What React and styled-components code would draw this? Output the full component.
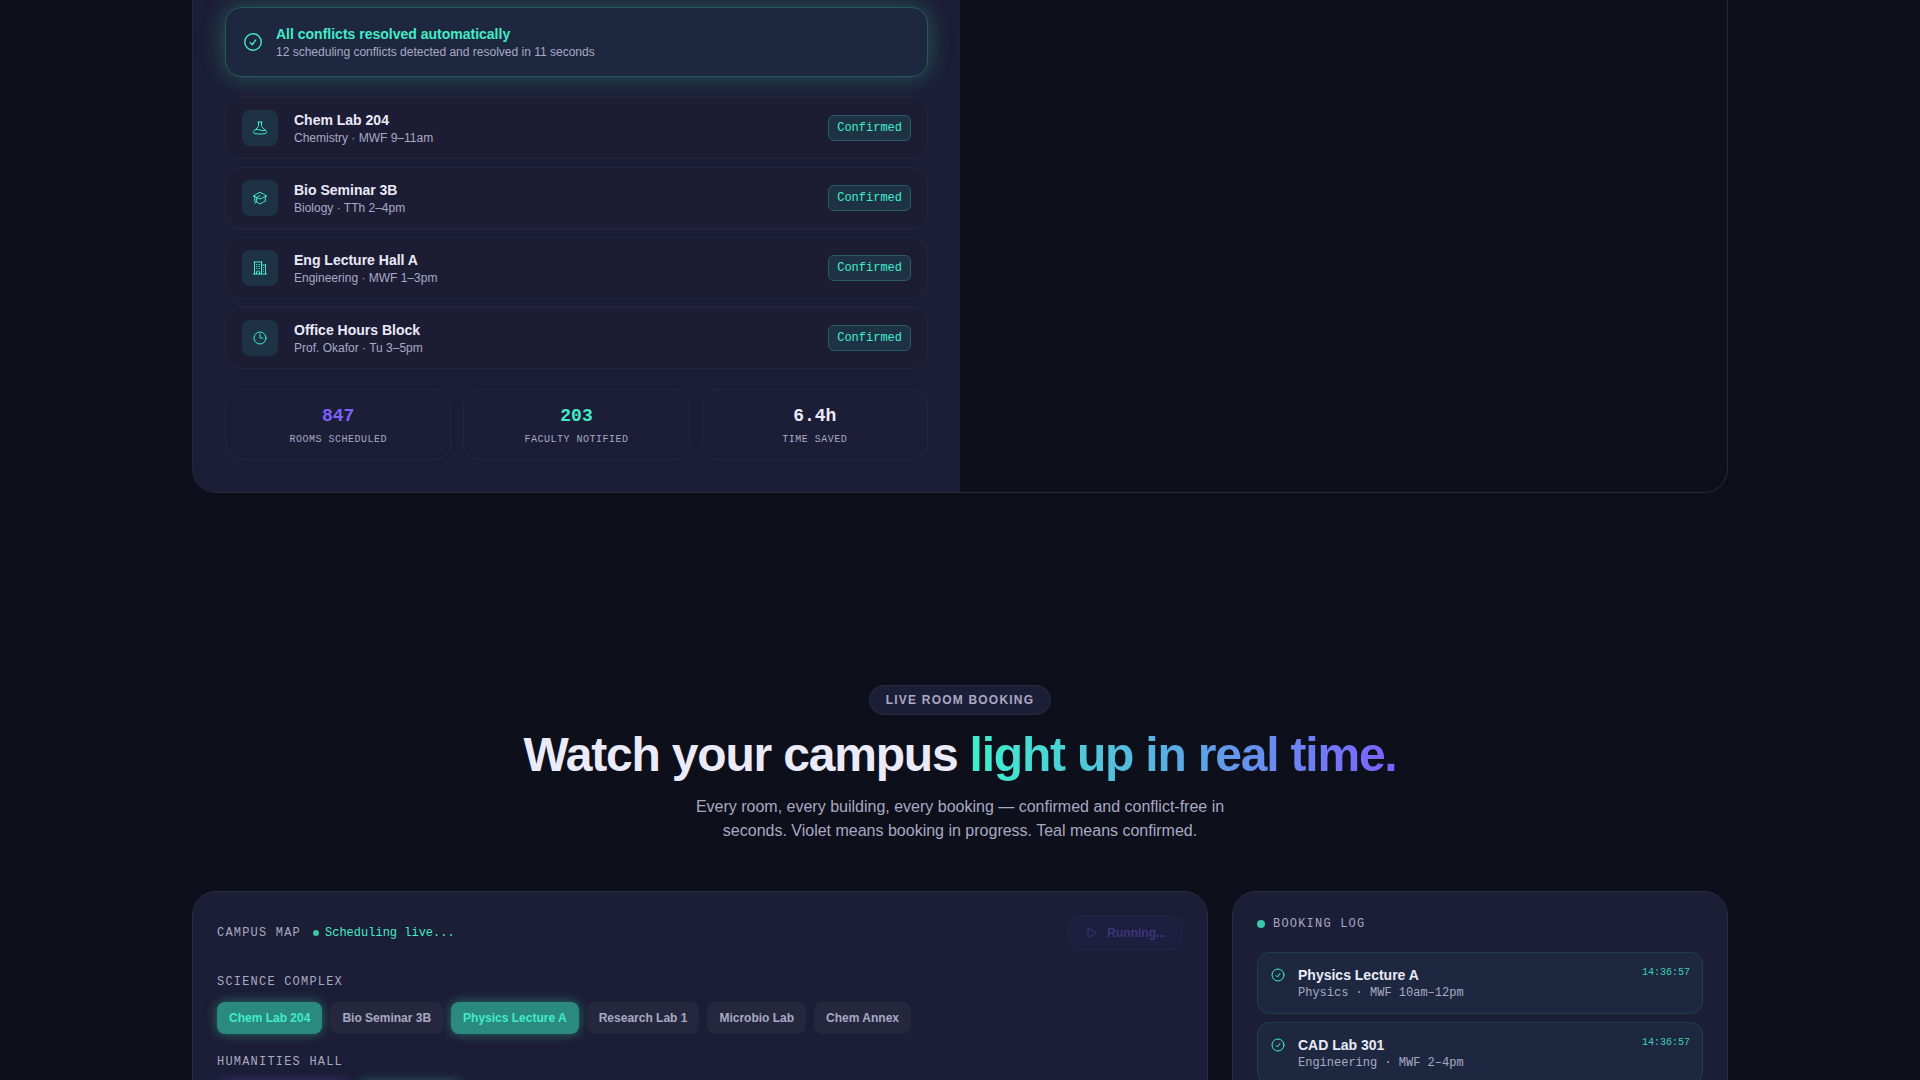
import React from 'react'
import styled, {createGlobalStyle, css} from 'styled-components'
import {
    HiOutlineAcademicCap,
    HiOutlineBeaker,
    HiOutlineBuildingOffice2,
    HiOutlineCheckCircle,
    HiOutlineClock,
    HiOutlinePlay
} from 'react-icons/hi2'


// --------------- Basic Styling -------------------
const sans = `'Liberation Sans', Arial, sans-serif`
const mono = `'Liberation Mono', 'Courier New', monospace`

const GlobalStyle = createGlobalStyle`
    * {
        box-sizing: border-box;
    }
    html {
        overflow: hidden;
        height: 100%;
    }
    body {
        margin: 0;
        height: 100%;
        overflow: hidden;
        background: #0d0f1b;
        color: #ebeaf8;
        font-family: ${sans};
        font-size: 14px;
        line-height: 20px;
    }
    h2, h3, p, ul {
        margin: 0;
        padding: 0;
    }
    ul {
        list-style: none;
    }
    svg {
        flex-shrink: 0;
    }
`

const Page = styled.main`
    max-width: 1584px;
    margin: 0 auto;
    padding: 0 24px;
`

// --------------- schedule preview ----------------
const Preview = styled.section`
    display: grid;
    grid-template-columns: 1fr 1fr;
    border: 1px solid #262838;
    border-top: none;
    border-radius: 0 0 24px 24px;
    overflow: hidden;
`

const Results = styled.div`
    display: flex;
    flex-direction: column;
    gap: 20px;
    padding: 7px 32px 32px;
    background: #1c1d36;
`

const Banner = styled.div`
    display: flex;
    align-items: center;
    gap: 12px;
    padding: 16px;
    border: 1px solid #25585c;
    border-radius: 16px;
    background: #1d2840;
    box-shadow: 0 0 24px rgba(61, 232, 186, 0.3);
    color: #43ebc8;
`

const Title = styled.h3`
    font-size: 14px;
    line-height: 20px;
    font-weight: 700;
    color: ${({$teal}) => $teal ? '#43ebc8' : '#ebeaf8'};
`

const Sub = styled.p`
    font-family: ${({$mono}) => $mono ? mono : sans};
    font-size: 12px;
    line-height: 16px;
    color: #a9a9c2;
`

const List = styled.ul`
    display: flex;
    flex-direction: column;
    gap: 8px;
`

const Row = styled.li`
    display: flex;
    align-items: center;
    gap: 16px;
    padding: 12px 16px;
    border: 1px solid #25273e;
    border-radius: 16px;
    background: #1c1d35;
`

const IconBox = styled.span`
    display: flex;
    align-items: center;
    justify-content: center;
    width: 36px;
    height: 36px;
    border-radius: 8px;
    background: #1d3345;
    color: #43ebc8;
`

const Grow = styled.div`
    flex: 1;
`

const Status = styled.span`
    padding: 4px 8px;
    border: 1px solid #285c62;
    border-radius: 6px;
    background: #1d3345;
    color: #43ebc8;
    font-family: ${mono};
    font-size: 12px;
    line-height: 16px;
`

const Stats = styled.div`
    display: grid;
    grid-template-columns: repeat(3, 1fr);
    gap: 12px;
`

const Stat = styled.div`
    padding: 14px 16px 12px;
    border: 1px solid #25273e;
    border-radius: 16px;
    text-align: center;
    font-family: ${mono};
`

const StatValue = styled.p`
    font-size: 18px;
    line-height: 25px;
    font-weight: 700;
    color: ${({$color}) => $color};
`

const StatLabel = styled.p`
    margin-top: 4px;
    font-size: 10px;
    line-height: 14px;
    letter-spacing: 0.05em;
    text-transform: uppercase;
    color: #a9a9c2;
`

// --------------- section heading -----------------
const Intro = styled.header`
    display: flex;
    flex-direction: column;
    align-items: center;
    padding: 192px 0 48px;
    text-align: center;
`

const Pill = styled.span`
    padding: 6px 16px;
    border: 1px solid #2a2b45;
    border-radius: 16px;
    background: #1c1d36;
    color: #a9a9c2;
    font-size: 12px;
    line-height: 16px;
    font-weight: 700;
    letter-spacing: 0.1em;
    text-transform: uppercase;
`

const Headline = styled.h2`
    margin: 12px 0;
    font-size: 48px;
    line-height: 56px;
    font-weight: 700;
    letter-spacing: -0.025em;
    color: #ebeaf8;

    span {
        background: linear-gradient(90deg, #3ef0cb, #7b61ff);
        background-clip: text;
        -webkit-background-clip: text;
        color: transparent;
    }
`

const Lead = styled.p`
    max-width: 560px;
    font-size: 16px;
    line-height: 24px;
    color: #a9a9c2;
`

// --------------- live booking --------------------
const Board = styled.section`
    display: grid;
    grid-template-columns: repeat(3, 1fr);
    gap: 24px;
`

const Panel = styled.div`
    grid-column: span ${({$span}) => $span || 1};
    padding: 24px;
    border: 1px solid #2a2c40;
    border-radius: 24px;
    background: #1c1d36;
`

const PanelHead = styled.div`
    display: flex;
    align-items: center;
    justify-content: space-between;
    margin-bottom: 24px;
`

const HeadGroup = styled.div`
    display: flex;
    align-items: center;
    gap: 12px;
`

const Caps = styled.h3`
    font-family: ${mono};
    font-size: 12px;
    line-height: 16px;
    font-weight: 400;
    letter-spacing: 0.1em;
    text-transform: uppercase;
    color: #a9a9c2;
`

const Live = styled.span`
    display: flex;
    align-items: center;
    gap: 6px;
    color: #43ebc8;
    font-family: ${mono};
    font-size: 12px;
    line-height: 16px;
`

const Dot = styled.span`
    width: ${({$size}) => $size}px;
    height: ${({$size}) => $size}px;
    border-radius: 50%;
    background: #38c5aa;
`

const RunButton = styled.button`
    display: flex;
    align-items: center;
    gap: 8px;
    padding: 8px 16px;
    border: 1px solid #30315a;
    border-radius: 12px;
    background: #23244a;
    color: #6f58f0;
    font-family: ${sans};
    font-size: 12px;
    line-height: 16px;
    font-weight: 700;

    &:disabled {
        opacity: 0.4;
    }
`

const Building = styled.div`
    margin-bottom: 20px;
`

const Rooms = styled.div`
    display: flex;
    flex-wrap: wrap;
    gap: 8px;
    margin-top: 12px;
`

const roomStates = {
    free: css`
        background: #25273f;
        color: #a9a9c2;
    `,
    confirmed: css`
        background: #2b8a80;
        color: #43ebc8;
        box-shadow: 0 0 12px rgba(61, 232, 196, 0.4);
    `,
    booking: css`
        background: #4a3f9c;
        color: #c4b8ff;
        box-shadow: 0 0 12px rgba(123, 97, 255, 0.4);
    `
}

const Room = styled.button`
    padding: 8px 12px;
    border: none;
    border-radius: 8px;
    font-family: ${sans};
    font-size: 12px;
    line-height: 16px;
    font-weight: 700;
    ${({$state}) => roomStates[$state]}
`

const LogHead = styled.div`
    display: flex;
    align-items: center;
    gap: 8px;
    margin-bottom: 20px;
`

const LogItem = styled.li`
    display: flex;
    align-items: flex-start;
    gap: 12px;
    padding: 12px;
    border: 1px solid #1f3f4c;
    border-radius: 12px;
    background: #1d2840;
    color: #43ebc8;

    svg {
        margin-top: 2px;
    }
`

const Time = styled.time`
    font-family: ${mono};
    font-size: 10px;
    line-height: 16px;
    color: #3fd0b4;
`

//--------------- page data --------------
const bookings = [
    {name: 'Chem Lab 204', detail: 'Chemistry · MWF 9–11am', Icon: HiOutlineBeaker},
    {name: 'Bio Seminar 3B', detail: 'Biology · TTh 2–4pm', Icon: HiOutlineAcademicCap},
    {name: 'Eng Lecture Hall A', detail: 'Engineering · MWF 1–3pm', Icon: HiOutlineBuildingOffice2},
    {name: 'Office Hours Block', detail: 'Prof. Okafor · Tu 3–5pm', Icon: HiOutlineClock}
]

const stats = [
    {value: '847', label: 'Rooms scheduled', color: '#7b61ff'},
    {value: '203', label: 'Faculty notified', color: '#43ebc8'},
    {value: '6.4h', label: 'Time saved', color: '#ebeaf8'}
]

const buildings = [
    {
        name: 'Science Complex',
        rooms: [
            ['Chem Lab 204', 'confirmed'],
            ['Bio Seminar 3B', 'free'],
            ['Physics Lecture A', 'confirmed'],
            ['Research Lab 1', 'free'],
            ['Microbio Lab', 'free'],
            ['Chem Annex', 'free']
        ]
    },
    {
        name: 'Humanities Hall',
        rooms: [
            ['Lecture Theatre 1A', 'booking'],
            ['Seminar Rm 2', 'confirmed']
        ]
    }
]

const log = [
    {name: 'Physics Lecture A', detail: 'Physics · MWF 10am–12pm', time: '14:36:57'},
    {name: 'CAD Lab 301', detail: 'Engineering · MWF 2–4pm', time: '14:36:57'}
]

const App = () => {
    return (
        <Page>
            <GlobalStyle />

            <Preview>
                <Results>
                    <Banner>
                        <HiOutlineCheckCircle size={22} />
                        <div>
                            <Title $teal>All conflicts resolved automatically</Title>
                            <Sub>12 scheduling conflicts detected and resolved in 11 seconds</Sub>
                        </div>
                    </Banner>
                    <List>
                        {bookings.map(({name, detail, Icon}) => (
                            <Row key={name}>
                                <IconBox><Icon size={16} /></IconBox>
                                <Grow>
                                    <Title>{name}</Title>
                                    <Sub>{detail}</Sub>
                                </Grow>
                                <Status>Confirmed</Status>
                            </Row>
                        ))}
                    </List>
                    <Stats>
                        {stats.map(({value, label, color}) => (
                            <Stat key={label}>
                                <StatValue $color={color}>{value}</StatValue>
                                <StatLabel>{label}</StatLabel>
                            </Stat>
                        ))}
                    </Stats>
                </Results>
            </Preview>

            <Intro>
                <Pill>Live Room Booking</Pill>
                <Headline>Watch your campus <span>light up in real time.</span></Headline>
                <Lead>
                    Every room, every building, every booking — confirmed and conflict-free in
                    seconds. Violet means booking in progress. Teal means confirmed.
                </Lead>
            </Intro>

            <Board>
                <Panel $span={2}>
                    <PanelHead>
                        <HeadGroup>
                            <Caps>Campus Map</Caps>
                            <Live><Dot $size={6} />Scheduling live...</Live>
                        </HeadGroup>
                        <RunButton type='button' disabled>
                            <HiOutlinePlay size={14} />
                            Running...
                        </RunButton>
                    </PanelHead>
                    {buildings.map(({name, rooms}) => (
                        <Building key={name}>
                            <Caps>{name}</Caps>
                            <Rooms>
                                {rooms.map(([room, state]) => (
                                    <Room key={room} type='button' $state={state}>{room}</Room>
                                ))}
                            </Rooms>
                        </Building>
                    ))}
                </Panel>

                <Panel>
                    <LogHead>
                        <Dot $size={8} />
                        <Caps>Booking Log</Caps>
                    </LogHead>
                    <List>
                        {log.map(({name, detail, time}) => (
                            <LogItem key={name}>
                                <HiOutlineCheckCircle size={16} />
                                <Grow>
                                    <Title>{name}</Title>
                                    <Sub $mono>{detail}</Sub>
                                </Grow>
                                <Time>{time}</Time>
                            </LogItem>
                        ))}
                    </List>
                </Panel>
            </Board>
        </Page>
    )
}

export default App
